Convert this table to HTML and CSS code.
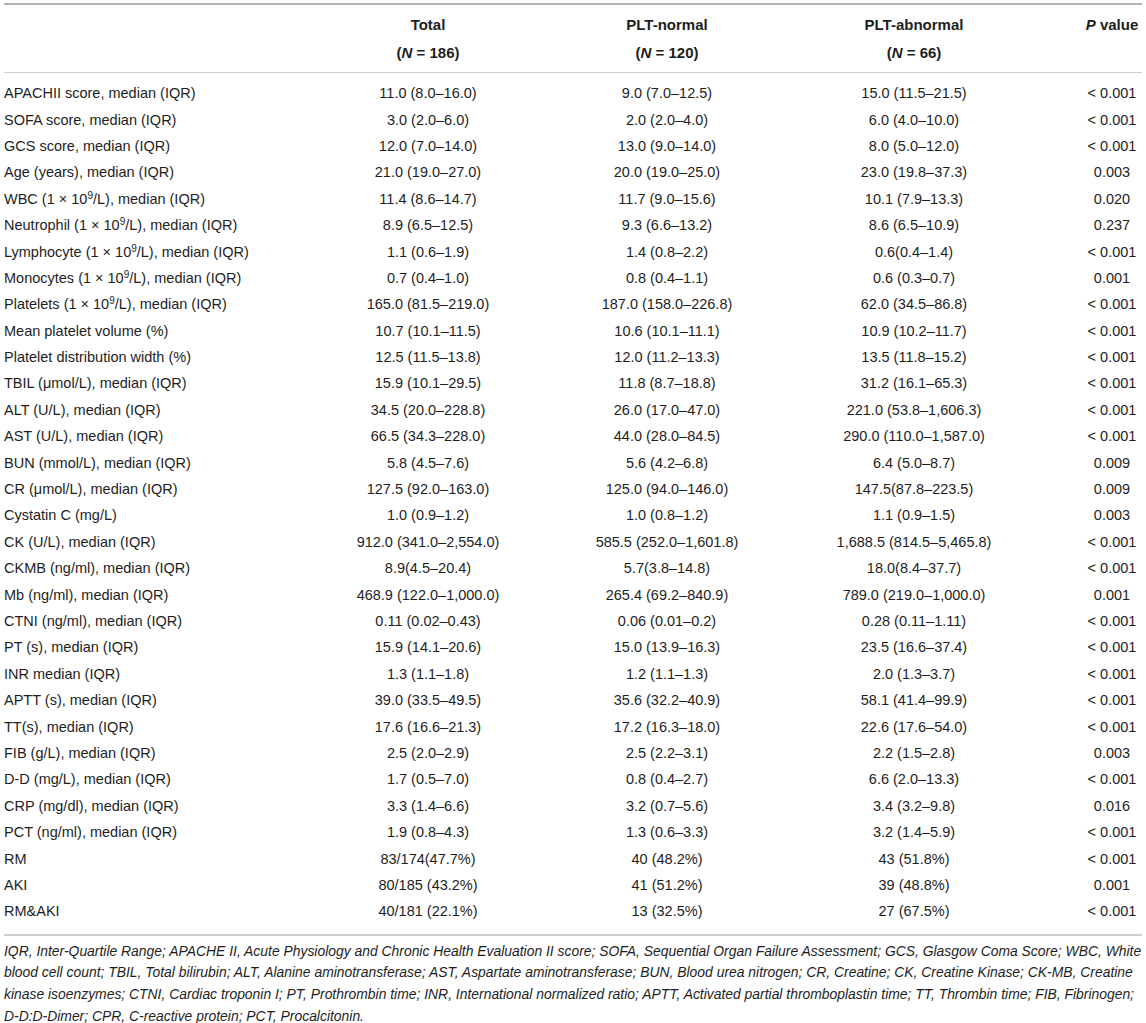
FILE: index.html
```html
<!DOCTYPE html>
<html>
<head>
<meta charset="utf-8">
<link rel="stylesheet" href="styles.css">
</head>
<body>
<div class="wrap">
<table class="tbl">
<colgroup>
<col class="c-label"><col class="c-total"><col class="c-norm"><col class="c-abn"><col class="c-p">
</colgroup>
<thead>
<tr class="h1"><th></th><th>Total</th><th>PLT-normal</th><th>PLT-abnormal</th><th class="pc"><i>P</i> value</th></tr>
<tr class="h2"><th></th><th>(<i>N</i> = 186)</th><th>(<i>N</i> = 120)</th><th>(<i>N</i> = 66)</th><th class="pc"></th></tr>
</thead>
<tbody>
<tr><td>APACHII score, median (IQR)</td><td>11.0 (8.0–16.0)</td><td>9.0 (7.0–12.5)</td><td>15.0 (11.5–21.5)</td><td class="pc">&lt; 0.001</td></tr>
<tr><td>SOFA score, median (IQR)</td><td>3.0 (2.0–6.0)</td><td>2.0 (2.0–4.0)</td><td>6.0 (4.0–10.0)</td><td class="pc">&lt; 0.001</td></tr>
<tr><td>GCS score, median (IQR)</td><td>12.0 (7.0–14.0)</td><td>13.0 (9.0–14.0)</td><td>8.0 (5.0–12.0)</td><td class="pc">&lt; 0.001</td></tr>
<tr><td>Age (years), median (IQR)</td><td>21.0 (19.0–27.0)</td><td>20.0 (19.0–25.0)</td><td>23.0 (19.8–37.3)</td><td class="pc">0.003</td></tr>
<tr><td>WBC (1 × 10<sup>9</sup>/L), median (IQR)</td><td>11.4 (8.6–14.7)</td><td>11.7 (9.0–15.6)</td><td>10.1 (7.9–13.3)</td><td class="pc">0.020</td></tr>
<tr><td>Neutrophil (1 × 10<sup>9</sup>/L), median (IQR)</td><td>8.9 (6.5–12.5)</td><td>9.3 (6.6–13.2)</td><td>8.6 (6.5–10.9)</td><td class="pc">0.237</td></tr>
<tr><td>Lymphocyte (1 × 10<sup>9</sup>/L), median (IQR)</td><td>1.1 (0.6–1.9)</td><td>1.4 (0.8–2.2)</td><td>0.6(0.4–1.4)</td><td class="pc">&lt; 0.001</td></tr>
<tr><td>Monocytes (1 × 10<sup>9</sup>/L), median (IQR)</td><td>0.7 (0.4–1.0)</td><td>0.8 (0.4–1.1)</td><td>0.6 (0.3–0.7)</td><td class="pc">0.001</td></tr>
<tr><td>Platelets (1 × 10<sup>9</sup>/L), median (IQR)</td><td>165.0 (81.5–219.0)</td><td>187.0 (158.0–226.8)</td><td>62.0 (34.5–86.8)</td><td class="pc">&lt; 0.001</td></tr>
<tr><td>Mean platelet volume (%)</td><td>10.7 (10.1–11.5)</td><td>10.6 (10.1–11.1)</td><td>10.9 (10.2–11.7)</td><td class="pc">&lt; 0.001</td></tr>
<tr><td>Platelet distribution width (%)</td><td>12.5 (11.5–13.8)</td><td>12.0 (11.2–13.3)</td><td>13.5 (11.8–15.2)</td><td class="pc">&lt; 0.001</td></tr>
<tr><td>TBIL (μmol/L), median (IQR)</td><td>15.9 (10.1–29.5)</td><td>11.8 (8.7–18.8)</td><td>31.2 (16.1–65.3)</td><td class="pc">&lt; 0.001</td></tr>
<tr><td>ALT (U/L), median (IQR)</td><td>34.5 (20.0–228.8)</td><td>26.0 (17.0–47.0)</td><td>221.0 (53.8–1,606.3)</td><td class="pc">&lt; 0.001</td></tr>
<tr><td>AST (U/L), median (IQR)</td><td>66.5 (34.3–228.0)</td><td>44.0 (28.0–84.5)</td><td>290.0 (110.0–1,587.0)</td><td class="pc">&lt; 0.001</td></tr>
<tr><td>BUN (mmol/L), median (IQR)</td><td>5.8 (4.5–7.6)</td><td>5.6 (4.2–6.8)</td><td>6.4 (5.0–8.7)</td><td class="pc">0.009</td></tr>
<tr><td>CR (μmol/L), median (IQR)</td><td>127.5 (92.0–163.0)</td><td>125.0 (94.0–146.0)</td><td>147.5(87.8–223.5)</td><td class="pc">0.009</td></tr>
<tr><td>Cystatin C (mg/L)</td><td>1.0 (0.9–1.2)</td><td>1.0 (0.8–1.2)</td><td>1.1 (0.9–1.5)</td><td class="pc">0.003</td></tr>
<tr><td>CK (U/L), median (IQR)</td><td>912.0 (341.0–2,554.0)</td><td>585.5 (252.0–1,601.8)</td><td>1,688.5 (814.5–5,465.8)</td><td class="pc">&lt; 0.001</td></tr>
<tr><td>CKMB (ng/ml), median (IQR)</td><td>8.9(4.5–20.4)</td><td>5.7(3.8–14.8)</td><td>18.0(8.4–37.7)</td><td class="pc">&lt; 0.001</td></tr>
<tr><td>Mb (ng/ml), median (IQR)</td><td>468.9 (122.0–1,000.0)</td><td>265.4 (69.2–840.9)</td><td>789.0 (219.0–1,000.0)</td><td class="pc">0.001</td></tr>
<tr><td>CTNI (ng/ml), median (IQR)</td><td>0.11 (0.02–0.43)</td><td>0.06 (0.01–0.2)</td><td>0.28 (0.11–1.11)</td><td class="pc">&lt; 0.001</td></tr>
<tr><td>PT (s), median (IQR)</td><td>15.9 (14.1–20.6)</td><td>15.0 (13.9–16.3)</td><td>23.5 (16.6–37.4)</td><td class="pc">&lt; 0.001</td></tr>
<tr><td>INR median (IQR)</td><td>1.3 (1.1–1.8)</td><td>1.2 (1.1–1.3)</td><td>2.0 (1.3–3.7)</td><td class="pc">&lt; 0.001</td></tr>
<tr><td>APTT (s), median (IQR)</td><td>39.0 (33.5–49.5)</td><td>35.6 (32.2–40.9)</td><td>58.1 (41.4–99.9)</td><td class="pc">&lt; 0.001</td></tr>
<tr><td>TT(s), median (IQR)</td><td>17.6 (16.6–21.3)</td><td>17.2 (16.3–18.0)</td><td>22.6 (17.6–54.0)</td><td class="pc">&lt; 0.001</td></tr>
<tr><td>FIB (g/L), median (IQR)</td><td>2.5 (2.0–2.9)</td><td>2.5 (2.2–3.1)</td><td>2.2 (1.5–2.8)</td><td class="pc">0.003</td></tr>
<tr><td>D-D (mg/L), median (IQR)</td><td>1.7 (0.5–7.0)</td><td>0.8 (0.4–2.7)</td><td>6.6 (2.0–13.3)</td><td class="pc">&lt; 0.001</td></tr>
<tr><td>CRP (mg/dl), median (IQR)</td><td>3.3 (1.4–6.6)</td><td>3.2 (0.7–5.6)</td><td>3.4 (3.2–9.8)</td><td class="pc">0.016</td></tr>
<tr><td>PCT (ng/ml), median (IQR)</td><td>1.9 (0.8–4.3)</td><td>1.3 (0.6–3.3)</td><td>3.2 (1.4–5.9)</td><td class="pc">&lt; 0.001</td></tr>
<tr><td>RM</td><td>83/174(47.7%)</td><td>40 (48.2%)</td><td>43 (51.8%)</td><td class="pc">&lt; 0.001</td></tr>
<tr><td>AKI</td><td>80/185 (43.2%)</td><td>41 (51.2%)</td><td>39 (48.8%)</td><td class="pc">0.001</td></tr>
<tr><td>RM&amp;AKI</td><td>40/181 (22.1%)</td><td>13 (32.5%)</td><td>27 (67.5%)</td><td class="pc">&lt; 0.001</td></tr>
</tbody>
</table>
<p class="note">IQR, Inter-Quartile Range; APACHE II, Acute Physiology and Chronic Health Evaluation II score; SOFA, Sequential Organ Failure Assessment; GCS, Glasgow Coma Score; WBC, White blood cell count; TBIL, Total bilirubin; ALT, Alanine aminotransferase; AST, Aspartate aminotransferase; BUN, Blood urea nitrogen; CR, Creatine; CK, Creatine Kinase; CK-MB, Creatine kinase isoenzymes; CTNI, Cardiac troponin I; PT, Prothrombin time; INR, International normalized ratio; APTT, Activated partial thromboplastin time; TT, Thrombin time; FIB, Fibrinogen; <span class="nw">D-D:D-Dimer;</span> CPR, C-reactive protein; PCT, Procalcitonin.</p>
</div>
</body>
</html>
```
FILE: styles.css
```css
html, body {
  margin: 0;
  padding: 0;
  background: #fff;
}
body {
  font-family: "Liberation Sans", Arial, sans-serif;
  color: #1e1e1e;
  font-size: 14.5px;
}
.wrap {
  padding: 3px 4px 0 4px;
}
.tbl {
  width: 1138px;
  border-collapse: collapse;
  table-layout: fixed;
  border-top: 2px solid #b4b4b4;
  border-bottom: 2px solid #cfcfcf;
}
.c-label { width: 296px; }
.c-total { width: 256px; }
.c-norm { width: 222px; }
.c-abn { width: 272px; }
.c-p { width: 92px; }
.tbl th {
  font-weight: bold;
  font-size: 15px;
  text-align: center;
  padding: 0;
  height: 28px;
  vertical-align: middle;
}
.tbl tr.h1 th { padding-top: 5px; }
.tbl tr.h2 th { padding-bottom: 6px; }
.tbl thead tr.h2 { border-bottom: 1px solid #cfcfcf; }
.tbl td {
  padding: 0;
  height: 26.4px;
  text-align: center;
  vertical-align: middle;
  white-space: nowrap;
}
.tbl td:first-child {
  text-align: left;
}
.tbl tbody tr:first-child td { padding-top: 7px; }
.tbl tbody tr:last-child td { padding-bottom: 9px; }
.tbl .pc {
  padding-left: 32px;
}
sup {
  font-size: 10px;
  line-height: 0;
  vertical-align: 5px;
}
.note {
  margin: 5px 0 0 0;
  font-style: italic;
  font-size: 13.9px;
  line-height: 21.7px;
}
.nw {
  white-space: nowrap;
}
```
